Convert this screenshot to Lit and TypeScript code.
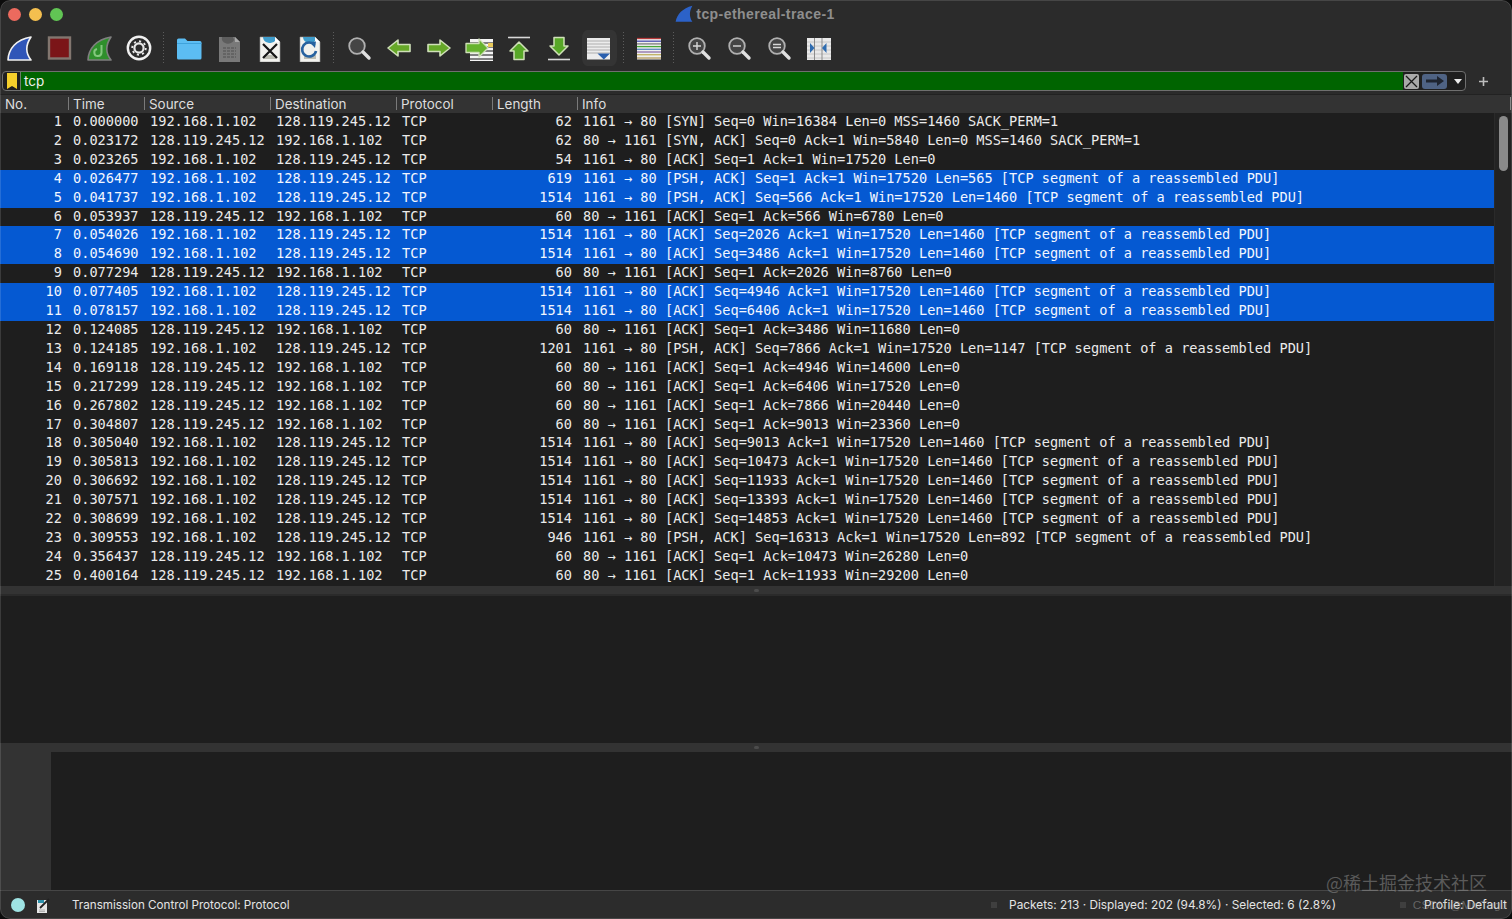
import { LitElement, html, css, svg } from "lit";
import { customElement } from "lit/decorators.js";

const A = "1161 → 80";
const B = "80 → 1161";
const C = "192.168.1.102";
const S = "128.119.245.12";
const PDU = "[TCP segment of a reassembled PDU]";
type R = [string, boolean, number, string, boolean?];
const rows: R[] = [
  ["0.000000", true, 62, `${A} [SYN] Seq=0 Win=16384 Len=0 MSS=1460 SACK_PERM=1`],
  ["0.023172", false, 62, `${B} [SYN, ACK] Seq=0 Ack=1 Win=5840 Len=0 MSS=1460 SACK_PERM=1`],
  ["0.023265", true, 54, `${A} [ACK] Seq=1 Ack=1 Win=17520 Len=0`],
  ["0.026477", true, 619, `${A} [PSH, ACK] Seq=1 Ack=1 Win=17520 Len=565 ${PDU}`, true],
  ["0.041737", true, 1514, `${A} [PSH, ACK] Seq=566 Ack=1 Win=17520 Len=1460 ${PDU}`, true],
  ["0.053937", false, 60, `${B} [ACK] Seq=1 Ack=566 Win=6780 Len=0`],
  ["0.054026", true, 1514, `${A} [ACK] Seq=2026 Ack=1 Win=17520 Len=1460 ${PDU}`, true],
  ["0.054690", true, 1514, `${A} [ACK] Seq=3486 Ack=1 Win=17520 Len=1460 ${PDU}`, true],
  ["0.077294", false, 60, `${B} [ACK] Seq=1 Ack=2026 Win=8760 Len=0`],
  ["0.077405", true, 1514, `${A} [ACK] Seq=4946 Ack=1 Win=17520 Len=1460 ${PDU}`, true],
  ["0.078157", true, 1514, `${A} [ACK] Seq=6406 Ack=1 Win=17520 Len=1460 ${PDU}`, true],
  ["0.124085", false, 60, `${B} [ACK] Seq=1 Ack=3486 Win=11680 Len=0`],
  ["0.124185", true, 1201, `${A} [PSH, ACK] Seq=7866 Ack=1 Win=17520 Len=1147 ${PDU}`],
  ["0.169118", false, 60, `${B} [ACK] Seq=1 Ack=4946 Win=14600 Len=0`],
  ["0.217299", false, 60, `${B} [ACK] Seq=1 Ack=6406 Win=17520 Len=0`],
  ["0.267802", false, 60, `${B} [ACK] Seq=1 Ack=7866 Win=20440 Len=0`],
  ["0.304807", false, 60, `${B} [ACK] Seq=1 Ack=9013 Win=23360 Len=0`],
  ["0.305040", true, 1514, `${A} [ACK] Seq=9013 Ack=1 Win=17520 Len=1460 ${PDU}`],
  ["0.305813", true, 1514, `${A} [ACK] Seq=10473 Ack=1 Win=17520 Len=1460 ${PDU}`],
  ["0.306692", true, 1514, `${A} [ACK] Seq=11933 Ack=1 Win=17520 Len=1460 ${PDU}`],
  ["0.307571", true, 1514, `${A} [ACK] Seq=13393 Ack=1 Win=17520 Len=1460 ${PDU}`],
  ["0.308699", true, 1514, `${A} [ACK] Seq=14853 Ack=1 Win=17520 Len=1460 ${PDU}`],
  ["0.309553", true, 946, `${A} [PSH, ACK] Seq=16313 Ack=1 Win=17520 Len=892 ${PDU}`],
  ["0.356437", false, 60, `${B} [ACK] Seq=1 Ack=10473 Win=26280 Len=0`],
  ["0.400164", false, 60, `${B} [ACK] Seq=1 Ack=11933 Win=29200 Len=0`],
];
const cols = ["No.", "Time", "Source", "Destination", "Protocol", "Length", "Info"];

const fin = (fill: string, stroke: string) =>
  svg`<path d="M3 26 C3.5 15 11 5.5 26 3 C20.5 11 20.5 19 26 26 Z" fill="${fill}" stroke="${stroke}" stroke-width="1.6" stroke-linejoin="round"/>`;

const docLines = svg`<path d="M9 22h12M9 24h12" stroke="#8a8a78" stroke-width="1"/>`;
const doc = (inner: unknown) => svg`
  <path d="M5 3h15l5 5v20H5z" fill="#f2f2ee" stroke="#999" stroke-width=".6"/>
  <path d="M8 3 A7 6 0 0 0 21 6 L20 3z" fill="#3f9ccb"/>
  <path d="M20 3v5h5z" fill="#fff"/>
  ${docLines}${inner}`;

const lens = (inner: unknown) => svg`
  <circle cx="12" cy="12" r="7.8" fill="#454545" stroke="#b0b0b0" stroke-width="1.8"/>
  <path d="M18 18 L24 24" stroke="#e0e0e0" stroke-width="3.4" stroke-linecap="round"/>${inner}`;

const arrowH = (d: string) =>
  svg`<path d="${d}" fill="#66a828" stroke="#cfe0b8" stroke-width="1.6" stroke-linejoin="round"/>`;

const stripes = [4.5, 7.2, 9.9, 12.6, 15.3, 18, 20.7, 24];

const icons: Record<string, unknown> = {
  shark: svg`${fin("#2f55b8", "#f1f1f1")}`,
  stop: svg`<rect x="4" y="3.5" width="21" height="21" fill="#7b1518" stroke="#82766f" stroke-width="2.4"/>`,
  restart: svg`${fin("#2f8f2c", "#7f7f7f")}
    <path d="M16.5 11 v7.5 a3.6 3.6 0 1 1 -4.5 -3.5" fill="none" stroke="#84c87e" stroke-width="2"/>`,
  gear: svg`<circle cx="14" cy="14" r="11.2" fill="#2b2b2b" stroke="#f0f0f0" stroke-width="2.4"/>
    <circle cx="14" cy="14" r="4.6" fill="none" stroke="#e8e8e8" stroke-width="2.2"/>
    <circle cx="14" cy="14" r="6.8" fill="none" stroke="#e8e8e8" stroke-width="1.8" stroke-dasharray="2.2 3.1"/>`,
  folder: svg`<path d="M2 6a1.5 1.5 0 0 1 1.5-1.5H10l2.5 2.5H25a1.5 1.5 0 0 1 1.5 1.5V24a1.5 1.5 0 0 1-1.5 1.5H3.5A1.5 1.5 0 0 1 2 24z" fill="#5cbdf3"/>
    <path d="M2 9.5h24.5" stroke="#3fa3dc" stroke-width="1"/>`,
  save: svg`<path d="M4 3h16l5 5v20H4z" fill="#797979"/><path d="M7 3 A6 5 0 0 0 19 6 L18 3z" fill="#5d5d5d"/><path d="M20 3v5h5z" fill="#a9a9a9"/>
    <path d="M8 14h13M8 17h13M8 20h13M8 23h13" stroke="#5e5e5e" stroke-width="1.3" stroke-dasharray="3 1"/>`,
  close: doc(svg`<path d="M8 10 L22 24 M22 10 L8 24" stroke="#161616" stroke-width="2.2"/>`),
  reload: doc(svg`<path d="M19.5 11 A7 7 0 1 0 21 17" fill="none" stroke="#27629f" stroke-width="2.6"/><path d="M14.5 8 L21 7.5 L20 14 z" fill="#27629f"/>`),
  find: lens(""),
  back: arrowH("M3 14 L13 6 V10.5 H25 V17.5 H13 V22 Z"),
  next: arrowH("M25 14 L15 6 V10.5 H3 V17.5 H15 V22 Z"),
  goto: svg`<rect x="5" y="5" width="24" height="22" fill="#f4f4f4"/>
    ${[9, 13, 17, 21, 25].map((y) => svg`<path d="M5 ${y}h24" stroke="#333" stroke-width="1.2"/>`)}
    <rect x="23" y="9" width="6" height="4" fill="#e8c95a"/>
    <path d="M23 14 L14 5 V9.5 H1 V18.5 H14 V23 Z" fill="#66b32e" stroke="#cfe0b8" stroke-width="1.3" stroke-linejoin="round"/>`,
  first: svg`<path d="M3 3.5h22" stroke="#d8d8d8" stroke-width="1.6"/>
    <path d="M14 8 L23 17 H19 V25.5 H9 V17 H5 Z" fill="#58a827" stroke="#cfe0b8" stroke-width="1.5" stroke-linejoin="round"/>`,
  last: svg`<path d="M3 25.5h22" stroke="#d8d8d8" stroke-width="1.6"/>
    <path d="M14 21 L23 12 H19 V3.5 H9 V12 H5 Z" fill="#58a827" stroke="#cfe0b8" stroke-width="1.5" stroke-linejoin="round"/>`,
  auto: svg`<rect x="2" y="4" width="23" height="21.5" fill="#ececec"/>
    ${[7, 10, 13, 16, 19].map((y) => svg`<path d="M2 ${y}h23" stroke="#a8a8a8" stroke-width=".9"/>`)}
    <path d="M12.5 19.5h12.5l-6.2 6z" fill="#2a5fae"/>`,
  color: svg`<rect x="2" y="4" width="24" height="21.5" fill="#efefef"/>
    ${["#b63a3a", "#4a4fb0", "#7d7d7d", "#46a536", "#5a8ac0", "#8d6ea8", "#c0b060", "#b59a5c"].map((c, i) => svg`<path d="M2 ${stripes[i]}h24" stroke="${c}" stroke-width="1.3"/>`)}`,
  zin: lens(svg`<path d="M8 12h8M12 8v8" stroke="#d8d8d8" stroke-width="1.4"/>`),
  zout: lens(svg`<path d="M8 12h8" stroke="#d8d8d8" stroke-width="1.4"/>`),
  zfit: lens(svg`<path d="M8 10.5h8M8 13.5h8" stroke="#d8d8d8" stroke-width="1.4"/>`),
  resize: svg`<rect x="2" y="4" width="24" height="22" fill="#e9e9e9"/>
    ${[8, 12, 16, 20, 24].map((y) => svg`<path d="M2 ${y}h24" stroke="#bdbdbd" stroke-width=".8"/>`)}
    <path d="M9.5 4v22M17 4v22" stroke="#8b8b8b" stroke-width="1"/>
    <path d="M5 9 L9.5 14 L5 19z M21.5 9 L17 14 L21.5 19z" fill="#2f6cb0"/>`,
};

const groups = [
  ["shark", "stop", "restart", "gear"],
  ["folder", "save", "close", "reload"],
  ["find", "back", "next", "goto", "first", "last", "auto"],
  ["color"],
  ["zin", "zout", "zfit", "resize"],
];

@customElement("app-root")
export class AppRoot extends LitElement {
  static styles = css`
    :host { display: block; height: 919px; background: #0c0c0c; overflow: hidden; }
    * { box-sizing: border-box; }
    .win { position: relative; height: 919px; display: flex; flex-direction: column; background: #2b2b2b; border-radius: 10px; overflow: hidden; font-family: Inter, "Liberation Sans", sans-serif; color: #e6e6e6; }
    .win::after { content: ""; position: absolute; inset: 0; border: 1px solid rgba(255,255,255,.13); border-radius: 10px; pointer-events: none; }
    .title { height: 28px; flex: none; display: flex; align-items: center; position: relative; justify-content: center; gap: 3px; padding-right: 2px; font-size: 14px; font-weight: 600; color: #8e8e8e; font-family: "Liberation Sans", sans-serif; letter-spacing: .42px; }
    .title svg { width: 18px; height: 18px; }
    .lights { position: absolute; left: 8px; top: 8px; display: flex; gap: 8px; }
    .lights i { width: 13px; height: 13px; border-radius: 50%; display: block; }
    .r { background: #ec6a5e; } .y { background: #f4bf4f; } .g { background: #61c554; }
    .toolbar { height: 40px; flex: none; display: flex; align-items: center; }
    .group { display: flex; }
    .tool { width: 40px; height: 36px; display: flex; align-items: center; justify-content: center; border-radius: 8px; margin-left: -1px; margin-right: 1px; padding: 0 2.5px; }
    .tool svg { width: 28px; height: 28px; display: block; flex: none; }
    .tool.on { background: #343434; background-clip: content-box; }
    .sep { width: 10px; height: 32px; margin-left: -1px; margin-right: 1px; padding-left: 4px; }
    .sep::before { content: ""; display: block; width: 1px; height: 100%; background: repeating-linear-gradient(to bottom, #5c5c5c 0 1px, transparent 1px 3px); }
    .filter { height: 26px; flex: none; display: flex; align-items: center; padding: 3px 0 3px 2px; }
    .field { width: 1464px; height: 20px; display: flex; align-items: center; border: 1px solid #6f6f6f; border-radius: 4px; background: #1f1f1f; overflow: hidden; }
    .mark { width: 17px; height: 100%; flex: none; display: flex; align-items: center; justify-content: center; }
    .mark svg { width: 10px; height: 16px; }
    .expr { width: 1383px; height: 100%; flex: none; background: #006400; border-left: 1px solid #6a7d6a; color: #f0f0f0; font-size: 13.5px; padding-left: 3px; display: flex; align-items: center; }
    .clr { width: 15px; height: 15px; flex: none; margin-left: 1px; background: #a9a9a9; border-radius: 2px; display: flex; }
    .apply { width: 25px; height: 15px; flex: none; margin-left: 3px; background: #4f6384; border-radius: 3px; display: flex; align-items: center; justify-content: center; }
    .drop { width: 0; height: 0; margin-left: 7px; border-left: 4px solid transparent; border-right: 4px solid transparent; border-top: 5px solid #ececec; }
    .plus { margin-left: 12px; width: 11px; height: 11px; display: flex; }
    .gap { height: 1px; flex: none; background: #222; }
    .cols { display: grid; grid-template-columns: 68px 76px 126px 126px 96px 85px 1fr; }
    .head { height: 18px; flex: none; background: #333333; font-size: 13.45px; color: #dedede; position: relative; }
    .head span { display: flex; align-items: center; height: 100%; padding-left: 5px; position: relative; }
    .head span + span::before { content: ""; position: absolute; left: 0; top: 2px; height: 13px; border-left: 1px solid #7a7a7a; }
    .head span:last-child::after { content: ""; position: absolute; right: 1px; top: 2px; height: 13px; border-left: 1px solid #8a8a8a; }
    .listwrap { height: 473px; flex: none; display: flex; background: #1e1e1e; }
    .list { width: 1494px; flex: none; overflow: hidden; font-family: "DejaVu Sans Mono", "Liberation Mono", monospace; font-size: 13.61px; color: #ebebeb; }
    .row { height: 18.92px; line-height: 16px; white-space: pre; }
    .row.sel { background: #0559d2; color: #f2f6ff; }
    .row span { padding-left: 6px; overflow: visible; }
    .row .t { padding-left: 5px; }
    .row .n { text-align: right; padding: 0 6px 0 0; }
    .row .l { text-align: right; padding: 0 5px 0 0; }
    .scroll { flex: 1; background: #232323; border-left: 1px solid #2a2a2a; padding: 3px 0 0 4px; }
    .thumb { width: 9px; height: 55px; border-radius: 5px; background: #8a8a8a; }
    .split { height: 8px; flex: none; background: #333333; display: flex; align-items: center; justify-content: center; }
    .split.b { height: 9px; }
    .split i { width: 5px; height: 3px; border-radius: 2px; background: #4c4c4c; display: block; }
    .pane { flex: none; background: #1e1e1e; }
    .detail { height: 149px; border-top: 2px solid #2a2a2a; }
    .bytes { height: 138px; display: flex; }
    .off { width: 51px; background: #333333; }
    .status { flex: 1; display: flex; align-items: center; background: #2c2c2c; border-top: 1px solid #464646; font-size: 11.85px; color: #e4e4e4; position: relative; }
    .led { width: 14px; height: 14px; border-radius: 50%; background: #9fe4e4; margin-left: 11px; flex: none; }
    .note { width: 13px; height: 15px; margin-left: 12px; flex: none; }
    .msg { margin-left: 22px; flex: 1; font-size: 11.65px; }
    .grip { width: 6px; height: 6px; background: #3f3f3f; flex: none; }
    .stats { margin-left: 12px; width: 391px; flex: none; }
    .prof { margin-left: 18px; margin-right: 5px; }
    .wm { position: absolute; right: 25px; bottom: 27px; font-size: 18px; color: rgba(150,150,150,.5); font-family: "Noto Sans CJK SC", sans-serif; line-height: 20px; pointer-events: none; }
    .wm2 { position: absolute; right: 5px; top: 7px; font-size: 11.8px; color: rgba(170,170,170,.45); font-family: "Liberation Sans", sans-serif; pointer-events: none; }
  `;

  render() {
    return html`<div class="win">
      <div class="title">
        <div class="lights"><i class="r"></i><i class="y"></i><i class="g"></i></div>
        <svg viewBox="0 0 28 28"><path d="M1 26 C3 14 12 5 27 1 C22 10 22 18 27 26 Z" fill="#2c62c8"/></svg>
        <span>tcp-ethereal-trace-1</span>
      </div>
      <div class="toolbar">
        ${groups.map((g, i) => html`
          ${i ? html`<div class="sep"></div>` : ""}
          <div class="group">
            ${g.map((k) => html`<div class="tool ${k === "auto" ? "on" : ""}"><svg viewBox="0 0 28 28">${icons[k]}</svg></div>`)}
          </div>`)}
      </div>
      <div class="filter">
        <div class="field">
          <div class="mark"><svg viewBox="0 0 10 16"><path d="M0 0h10v16l-5-3-5 3z" fill="#f5cf2b"/></svg></div>
          <div class="expr">tcp</div>
          <div class="clr"><svg viewBox="0 0 15 15"><path d="M2 2 L13 13 M13 2 L2 13" stroke="#1a1a1a" stroke-width="1.3"/></svg></div>
          <div class="apply"><svg width="18" height="10" viewBox="0 0 18 10"><path d="M0 3.5h11V0l7 5-7 5V6.5H0z" fill="#1f2530"/></svg></div>
          <div class="drop"></div>
        </div>
        <svg class="plus" viewBox="0 0 11 11"><path d="M5.5 1v9M1 5.5h9" stroke="#bdbdbd" stroke-width="1.6"/></svg>
      </div>
      <div class="gap"></div>
      <div class="cols head">${cols.map((c) => html`<span>${c}</span>`)}</div>
      <div class="listwrap">
        <div class="list">
          ${rows.map((r, i) => html`<div class="row cols ${r[4] ? "sel" : ""}">
            <span class="n">${i + 1}</span>
            <span class="t">${r[0]}</span>
            <span>${r[1] ? C : S}</span>
            <span>${r[1] ? S : C}</span>
            <span>TCP</span>
            <span class="l">${r[2]}</span>
            <span>${r[3]}</span>
          </div>`)}
        </div>
        <div class="scroll"><div class="thumb"></div></div>
      </div>
      <div class="split"><i></i></div>
      <div class="pane detail"></div>
      <div class="split b"><i></i></div>
      <div class="pane bytes"><div class="off"></div></div>
      <div class="status">
        <div class="led"></div>
        <svg class="note" viewBox="0 0 13 15"><path d="M0 2h10v13H0z" fill="#e6e6e6"/><path d="M1 2h6v3H1z" fill="#2e93ad"/><path d="M3 10 L12 1" stroke="#222" stroke-width="1.8"/><path d="M2 12h6M2 13.5h6" stroke="#999" stroke-width=".7"/></svg>
        <span class="msg">Transmission Control Protocol: Protocol</span>
        <i class="grip"></i>
        <span class="stats">Packets: 213 · Displayed: 202 (94.8%) · Selected: 6 (2.8%)</span>
        <i class="grip"></i>
        <span class="prof">Profile: Default</span>
        <span class="wm2">CSDN @MinTugu</span>
      </div>
      <div class="wm">@稀土掘金技术社区</div>
    </div>`;
  }
}
